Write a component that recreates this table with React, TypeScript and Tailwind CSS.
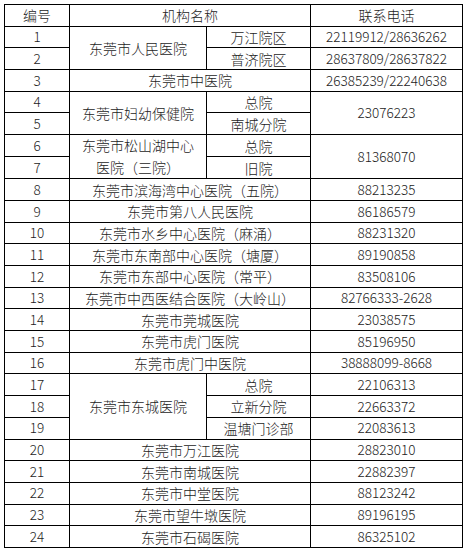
import React from "react";

const cell = "border border-black text-center align-middle p-0";
const num = "text-[13.5px]";

export default function App() {
  const h = "h-[21.68px]";

  return (
    <div className="bg-white w-[466px] h-[551px] pt-[4px] pl-[4px]" style={{ fontFamily: '"Noto Sans CJK SC", "Noto Sans", sans-serif' }}>
      <table className="table-fixed border-collapse text-[#1c1c1c] text-[14px] font-light leading-none w-[458px]">
        <colgroup>
          <col className="w-[65px]" />
          <col className="w-[137px]" />
          <col className="w-[104px]" />
          <col className="w-[152px]" />
        </colgroup>
        <tbody>
          <tr className={h}>
            <td className={cell}>编号</td>
            <td className={cell} colSpan={2}>机构名称</td>
            <td className={cell}>联系电话</td>
          </tr>
          <tr className={h}>
            <td className={`${cell} ${num}`}>1</td>
            <td className={cell} rowSpan={2}>东莞市人民医院</td>
            <td className={cell}>万江院区</td>
            <td className={`${cell} ${num}`}>22119912/28636262</td>
          </tr>
          <tr className={h}>
            <td className={`${cell} ${num}`}>2</td>
            <td className={cell}>普济院区</td>
            <td className={`${cell} ${num}`}>28637809/28637822</td>
          </tr>
          <SimpleRow no={3} name="东莞市中医院" phone="26385239/22240638" />
          <tr className={h}>
            <td className={`${cell} ${num}`}>4</td>
            <td className={cell} rowSpan={2}>东莞市妇幼保健院</td>
            <td className={cell}>总院</td>
            <td className={`${cell} ${num}`} rowSpan={2}>23076223</td>
          </tr>
          <tr className={h}>
            <td className={`${cell} ${num}`}>5</td>
            <td className={cell}>南城分院</td>
          </tr>
          <tr className={h}>
            <td className={`${cell} ${num}`}>6</td>
            <td className={cell} rowSpan={2}>
              <div className="leading-[21.7px]">
                东莞市松山湖中心
                <br />
                医院（三院）
              </div>
            </td>
            <td className={cell}>总院</td>
            <td className={`${cell} ${num}`} rowSpan={2}>81368070</td>
          </tr>
          <tr className={h}>
            <td className={`${cell} ${num}`}>7</td>
            <td className={cell}>旧院</td>
          </tr>
          <SimpleRow no={8} name="东莞市滨海湾中心医院（五院）" phone="88213235" />
          <SimpleRow no={9} name="东莞市第八人民医院" phone="86186579" />
          <SimpleRow no={10} name="东莞市水乡中心医院（麻涌）" phone="88231320" />
          <SimpleRow no={11} name="东莞市东南部中心医院（塘厦）" phone="89190858" />
          <SimpleRow no={12} name="东莞市东部中心医院（常平）" phone="83508106" />
          <SimpleRow no={13} name="东莞市中西医结合医院（大岭山）" phone="82766333-2628" />
          <SimpleRow no={14} name="东莞市莞城医院" phone="23038575" />
          <SimpleRow no={15} name="东莞市虎门医院" phone="85196950" />
          <SimpleRow no={16} name="东莞市虎门中医院" phone="38888099-8668" />
          <tr className={h}>
            <td className={`${cell} ${num}`}>17</td>
            <td className={cell} rowSpan={3}>东莞市东城医院</td>
            <td className={cell}>总院</td>
            <td className={`${cell} ${num}`}>22106313</td>
          </tr>
          <tr className={h}>
            <td className={`${cell} ${num}`}>18</td>
            <td className={cell}>立新分院</td>
            <td className={`${cell} ${num}`}>22663372</td>
          </tr>
          <tr className={h}>
            <td className={`${cell} ${num}`}>19</td>
            <td className={cell}>温塘门诊部</td>
            <td className={`${cell} ${num}`}>22083613</td>
          </tr>
          <SimpleRow no={20} name="东莞市万江医院" phone="28823010" />
          <SimpleRow no={21} name="东莞市南城医院" phone="22882397" />
          <SimpleRow no={22} name="东莞市中堂医院" phone="88123242" />
          <SimpleRow no={23} name="东莞市望牛墩医院" phone="89196195" />
          <SimpleRow no={24} name="东莞市石碣医院" phone="86325102" />
        </tbody>
      </table>
    </div>
  );
}

function SimpleRow({ no, name, phone }: { no: number; name: string; phone: string }) {
  return (
    <tr className="h-[21.68px]">
      <td className={`${cell} ${num}`}>{no}</td>
      <td className={cell} colSpan={2}>
        {name}
      </td>
      <td className={`${cell} ${num}`}>{phone}</td>
    </tr>
  );
}
